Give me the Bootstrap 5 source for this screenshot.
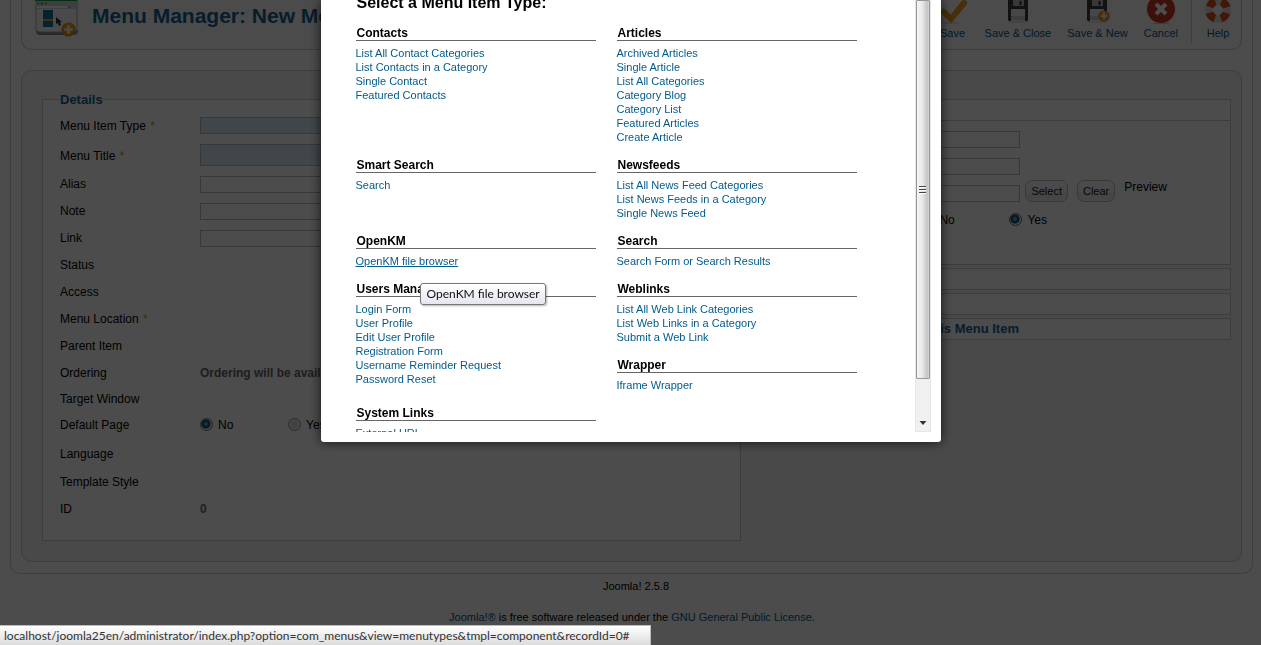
<!DOCTYPE html>
<html lang="en">
<head>
<meta charset="utf-8">
<meta name="viewport" content="width=device-width, initial-scale=1">
<title>Menu Manager: New Menu Item</title>
<link rel="stylesheet" href="https://cdn.jsdelivr.net/npm/bootstrap@5.3.0/dist/css/bootstrap.min.css">
<style>
body{font-family:"Liberation Sans",Arial,sans-serif;font-size:12px;line-height:16px;color:#000;background:#fff;overflow:hidden}
a{color:#025a8d;text-decoration:none}
.content-box{margin:0 8px 0 10px;padding:0 10px 11px;border:1px solid #ccc;border-top:0;border-radius:0 0 10px 10px}
.header-box{height:50px;border:1px solid #ccc;border-top:0;border-radius:0 0 10px 10px;padding:0 3px 0 13px;background:#fbfbfb}
.page-title{font-size:21px;line-height:32px;font-weight:700;color:#146295;margin:0 0 0 13px}
.tool-btn{border:0;background:none;padding:0 8px;font-size:11px;line-height:16px;color:#025a8d}
.tool-btn svg{display:block;margin:0 auto}
.tool-sep{width:1px;height:43px;background:#ccc;margin:0 6px 0 5px}
.main-box{margin-top:20px;border:1px solid #ccc;border-radius:10px;padding:21px 10px 20px;background:#f4f4f4}
.col-details{flex:0 0 60%;padding:0 10px}
.col-options{flex:0 0 40%;padding:7px 0 0 10px}
.details-set{position:relative;border:1px solid #ccc;background:#fff;margin-top:7px;padding:11px 17px 17px}
.details-set legend{position:absolute;top:-8px;left:17px;width:auto;margin:0;font-size:13px;line-height:16px;font-weight:700;color:#146295;background:linear-gradient(#f4f4f4 8px,#fff 8px);float:none}
.f-row{display:flex;align-items:center;height:27px}
.f-row.tall{height:30px}
.f-row.short{height:25px}
.f-label{flex:0 0 140px;padding-bottom:2px}
.f-row.tall .f-label{padding-bottom:0}
.f-label i{font-style:normal;color:#e8820c;padding-left:1px}
.f-input{border:1px solid #bbb;height:17px;padding:0 3px;background:#fff;width:240px}
.f-input.req{background:#d6ebf8;margin-bottom:2px}
.f-input.big{height:22px}
.f-input.slim{width:99px}
.f-note{font-weight:700;color:#666;padding-bottom:2px}
.f-radio{display:flex;align-items:center;width:88px;padding-bottom:2px}
.f-radio input{appearance:none;width:13px;height:13px;margin:0 5px 0 0;border:1px solid #8e8f8f;border-radius:50%;background:radial-gradient(circle,#ddd 0 3px,#f6f6f6 5px)}
.f-radio input:checked{background:radial-gradient(circle at 5px 5px,#7fd8f8 0,#1f7ba8 2px,#123a55 4px,#f2f2f2 5px);border-color:#666}
.opt-panel{border:1px solid #ccc;background:#fff;margin-bottom:3px}
.opt-title{display:block;width:100%;height:20px;border:0;background:none;text-align:left;padding:0 18px;font-size:13px;line-height:20px;font-weight:700;color:#146295}
.opt-body{border-top:1px solid #ccc;padding:5px 0 30px 19px}
.img-tools{gap:9px;padding:0 0 5px 5px}
.small-btn{height:22px;border:1px solid #bbb;border-radius:7px;background:linear-gradient(#fff,#f2f2f2 60%,#e6e6e6 60%,#eee);padding:0 5px;font-size:11px;line-height:16px;color:#222}
.foot{font-size:11px;line-height:16px;text-align:center;padding:4px 0 0 3px}
.foot p{margin:0 0 15px}
.shade{position:fixed;inset:0;background:rgba(0,0,0,.7)}
.picker-wrap{position:fixed;inset:0}
.picker{width:620px;height:442px;padding:0 10px 10px;background:#fff;border-radius:0 0 3px 3px;box-shadow:0 0 12px rgba(0,0,0,.75)}
.picker-scroll{height:432px;overflow:hidden}
.picker-main{padding-left:25px;margin-top:-7px}
.picker h2{font-size:16px;line-height:20px;font-weight:700;margin:0 0 11px;padding-left:1px}
.type-grid{display:grid;grid-template-columns:240px 240px;gap:12px 21px}
.type-grid h3{font-size:12px;line-height:14px;font-weight:700;margin:0 0 5px;padding:2px 0 0 1px;border-bottom:1px solid #666}
.type-grid ul{list-style:none;margin:0;padding:0;font-size:11px;line-height:14px}
.type-grid a.hovered{text-decoration:underline}
.span-two{grid-row:span 2}
.tip-anchor{position:relative}
.tip{position:absolute;left:64px;top:29px;z-index:2;white-space:nowrap;border:1px solid #767676;border-radius:3px;background:linear-gradient(#fff,#e4e5f0);color:#111;font:12px/20px Lato,"Open Sans",sans-serif;padding:0 5px 0 6px;box-shadow:1px 1px 2px rgba(0,0,0,.3)}
.track{width:16px;background:#f0f0f0;border:1px solid #e6e6e6;border-top:0}
.thumb{height:379px;border:1px solid #979797;border-radius:1px;background:linear-gradient(90deg,#f5f5f5,#e8e8ea 45%,#c4c4c9 85%,#d8d8d8);display:flex;align-items:center;justify-content:center}
.status-url{position:fixed;left:0;bottom:0;min-width:651px;height:20px;border:1px solid #bbb;border-left:0;border-bottom:0;background:linear-gradient(#fff,#dcdcdc);color:#333;font:12px/20px Lato,"Open Sans",sans-serif;padding:0 4px;white-space:nowrap}
</style>
</head>
<body>
<svg width="0" height="0" class="position-absolute" aria-hidden="true">
  <symbol id="floppy" viewBox="0 0 32 25">
    <path d="M6 0h20v19.500q0 1.500-1.500 1.500h-17Q6 21 6 19.500z" fill="#3c3c3c"/>
    <path d="M11 0h11v6H11z" fill="#bbb"/><path d="M17.500 1h2v4h-2z" fill="#333"/>
    <path d="M9 9h14v12H9z" fill="#eee"/><path d="M9 16h14v4H9z" fill="#ccc"/>
    <path d="M7 22h19" stroke="#ccc"/>
  </symbol>
  <symbol id="plus-dot" viewBox="0 0 14 14">
    <circle cx="7" cy="7" r="6.500" fill="#e8870f"/><circle cx="7" cy="6" r="5" fill="#f5a02a"/>
    <path d="M7 3v8M3 7h8" stroke="#fff" stroke-width="2"/>
  </symbol>
</svg>

<div class="content-box">
  <header class="header-box d-flex align-items-start justify-content-between">
    <div class="d-flex">
      <svg width="44" height="38" viewBox="0 0 44 38" aria-hidden="true">
        <path d="M1 30q0 5 4 5h34q4 0 4-5z" fill="#888"/>
        <path d="M1 0h41v28q0 4-4 4H5q-4 0-4-4z" fill="#f7f7f7" stroke="#aaa"/>
        <path d="M0 0h42v1H0z" fill="#189a3c"/><path d="M1 1h41v8H1z" fill="#ccd5dc"/>
        <circle cx="3" cy="3.500" r="1.200" fill="#7fb23b"/><circle cx="7" cy="3.500" r="1.200" fill="#2a8fc0"/><circle cx="11" cy="3.500" r="1.200" fill="#e8870f"/>
        <path d="M2 6h31v2H2z" fill="#fff"/><circle cx="34" cy="7" r="1" fill="#7fb23b"/>
        <path d="M8 10h10v17H8z" fill="#1573a5"/><path d="M8 19h10v2H8z" fill="#e8a020"/>
        <path d="M21 17v7l2-1 1 3 2-1-1-3h2z" fill="#333"/>
        <use href="#plus-dot" x="26" y="22" width="15" height="15"/>
      </svg>
      <h1 class="page-title">Menu Manager: New Menu Item</h1>
    </div>
    <div class="d-flex align-items-start">
      <button type="button" class="tool-btn"><svg width="32" height="25" viewBox="0 0 32 25"><path d="M7 12l7 7L27 3" fill="none" stroke="#ef9d1e" stroke-width="6" stroke-linecap="round"/><path d="M4 23h18" stroke="#ccc"/></svg>Save</button>
      <button type="button" class="tool-btn"><svg width="32" height="25"><use href="#floppy"/></svg>Save &amp; Close</button>
      <button type="button" class="tool-btn"><svg width="32" height="25"><use href="#floppy"/><use href="#plus-dot" x="17" y="10" width="12" height="12"/></svg>Save &amp; New</button>
      <button type="button" class="tool-btn"><svg width="32" height="25" viewBox="0 0 32 25"><circle cx="16" cy="9" r="14" fill="#c93a1e"/><path d="M8 23.500h16" stroke="#ccc"/><path d="M11 4l10 10M21 4L11 14" stroke="#fff" stroke-width="4"/></svg>Cancel</button>
      <div class="tool-sep"></div>
      <button type="button" class="tool-btn px-1"><svg width="32" height="25" viewBox="0 0 32 25"><circle cx="16" cy="10" r="9" fill="none" stroke="#ddd" stroke-width="7.500"/><circle cx="16" cy="10" r="9" fill="none" stroke="#d9501c" stroke-width="8" stroke-dasharray="8 6.137" stroke-dashoffset="-3.070"/></svg>Help</button>
    </div>
  </header>

  <main class="main-box d-flex align-items-start">
    <div class="col-details">
      <fieldset class="details-set">
        <legend>Details</legend>
        <div class="f-row tall"><label class="f-label" for="f1">Menu Item Type <i>*</i></label><input class="f-input req" id="f1" type="text"></div>
        <div class="f-row tall"><label class="f-label" for="f2">Menu Title <i>*</i></label><input class="f-input req big" id="f2" type="text"></div>
        <div class="f-row"><label class="f-label" for="f3">Alias</label><input class="f-input" id="f3" type="text"></div>
        <div class="f-row"><label class="f-label" for="f4">Note</label><input class="f-input" id="f4" type="text"></div>
        <div class="f-row"><label class="f-label" for="f5">Link</label><input class="f-input" id="f5" type="text"></div>
        <div class="f-row"><span class="f-label">Status</span></div>
        <div class="f-row"><span class="f-label">Access</span></div>
        <div class="f-row"><span class="f-label">Menu Location <i>*</i></span></div>
        <div class="f-row"><span class="f-label">Parent Item</span></div>
        <div class="f-row"><span class="f-label">Ordering</span><span class="f-note">Ordering will be available after saving</span></div>
        <div class="f-row short"><span class="f-label">Target Window</span></div>
        <div class="f-row"><span class="f-label">Default Page</span><label class="f-radio"><input type="radio" name="home" checked>No</label><label class="f-radio"><input type="radio" name="home">Yes</label></div>
        <div class="f-row tall"><span class="f-label">Language</span></div>
        <div class="f-row"><span class="f-label">Template Style</span></div>
        <div class="f-row"><span class="f-label">ID</span><span class="f-note">0</span></div>
      </fieldset>
    </div>
    <div class="col-options">
      <section class="opt-panel">
        <button type="button" class="opt-title" aria-label="Link Type Options"></button>
        <div class="opt-body">
          <div class="f-row"><span class="f-label"></span><input class="f-input slim" type="text" aria-label="Link Title Attribute"></div>
          <div class="f-row"><span class="f-label"></span><input class="f-input slim" type="text" aria-label="Link CSS Style"></div>
          <div class="f-row"><span class="f-label"></span><input class="f-input slim" type="text" aria-label="Link Image">
            <div class="img-tools d-flex align-items-center">
              <button type="button" class="small-btn">Select</button>
              <button type="button" class="small-btn">Clear</button>
              <span class="pb-2">Preview</span>
            </div></div>
          <div class="f-row"><span class="f-label"></span><label class="f-radio"><input type="radio" name="txt">No</label><label class="f-radio"><input type="radio" name="txt" checked>Yes</label></div>
        </div>
      </section>
      <section class="opt-panel"><button type="button" class="opt-title" aria-label="Page Display Options"></button></section>
      <section class="opt-panel"><button type="button" class="opt-title" aria-label="Metadata Options"></button></section>
      <section class="opt-panel"><button type="button" class="opt-title">Module Assignment for this Menu Item</button></section>
    </div>
  </main>
</div>

<footer class="foot">
  <p class="ps-2">Joomla! 2.5.8</p>
  <p><a href="#">Joomla!®</a> is free software released under the <a href="#">GNU General Public License</a>.</p>
</footer>

<div class="shade"></div>

<div class="picker-wrap d-flex justify-content-center align-items-start">
  <div class="picker" role="dialog" aria-label="Select a Menu Item Type">
    <div class="picker-scroll d-flex justify-content-between">
      <div class="picker-main">
        <h2>Select a Menu Item Type:</h2>
        <div class="type-grid">
          <section><h3>Contacts</h3><ul>
            <li><a href="#">List All Contact Categories</a></li><li><a href="#">List Contacts in a Category</a></li><li><a href="#">Single Contact</a></li><li><a href="#">Featured Contacts</a></li></ul></section>
          <section><h3>Articles</h3><ul>
            <li><a href="#">Archived Articles</a></li><li><a href="#">Single Article</a></li><li><a href="#">List All Categories</a></li><li><a href="#">Category Blog</a></li><li><a href="#">Category List</a></li><li><a href="#">Featured Articles</a></li><li><a href="#">Create Article</a></li></ul></section>
          <section><h3>Smart Search</h3><ul><li><a href="#">Search</a></li></ul></section>
          <section><h3>Newsfeeds</h3><ul>
            <li><a href="#">List All News Feed Categories</a></li><li><a href="#">List News Feeds in a Category</a></li><li><a href="#">Single News Feed</a></li></ul></section>
          <section><h3>OpenKM</h3><ul><li class="tip-anchor"><a href="#" class="hovered">OpenKM file browser</a><span class="tip" role="tooltip">OpenKM file browser</span></li></ul></section>
          <section><h3>Search</h3><ul><li><a href="#">Search Form or Search Results</a></li></ul></section>
          <section class="span-two"><h3>Users Manager</h3><ul>
            <li><a href="#">Login Form</a></li><li><a href="#">User Profile</a></li><li><a href="#">Edit User Profile</a></li><li><a href="#">Registration Form</a></li><li><a href="#">Username Reminder Request</a></li><li><a href="#">Password Reset</a></li></ul></section>
          <section><h3>Weblinks</h3><ul>
            <li><a href="#">List All Web Link Categories</a></li><li><a href="#">List Web Links in a Category</a></li><li><a href="#">Submit a Web Link</a></li></ul></section>
          <section><h3>Wrapper</h3><ul><li><a href="#">Iframe Wrapper</a></li></ul></section>
          <section><h3>System Links</h3><ul><li><a href="#">External URL</a></li></ul></section>
        </div>
      </div>
      <div class="track d-flex flex-column justify-content-between">
        <div class="thumb"><svg width="8" height="8" viewBox="0 0 8 8"><path d="M0 .5h7M0 3.500h7M0 6.500h7" stroke="#444"/><path d="M0 1.500h7M0 4.500h7M0 7.500h7" stroke="#fff"/></svg></div>
        <svg width="14" height="16" viewBox="0 0 14 16"><path d="M3.500 6h7L7 10z" fill="#333"/></svg>
      </div>
    </div>
  </div>
</div>

<div class="status-url">localhost/joomla25en/administrator/index.php?option=com_menus&amp;view=menutypes&amp;tmpl=component&amp;recordId=0#</div>
<script src="https://cdn.jsdelivr.net/npm/bootstrap@5.3.0/dist/js/bootstrap.bundle.min.js"></script>
</body>
</html>
